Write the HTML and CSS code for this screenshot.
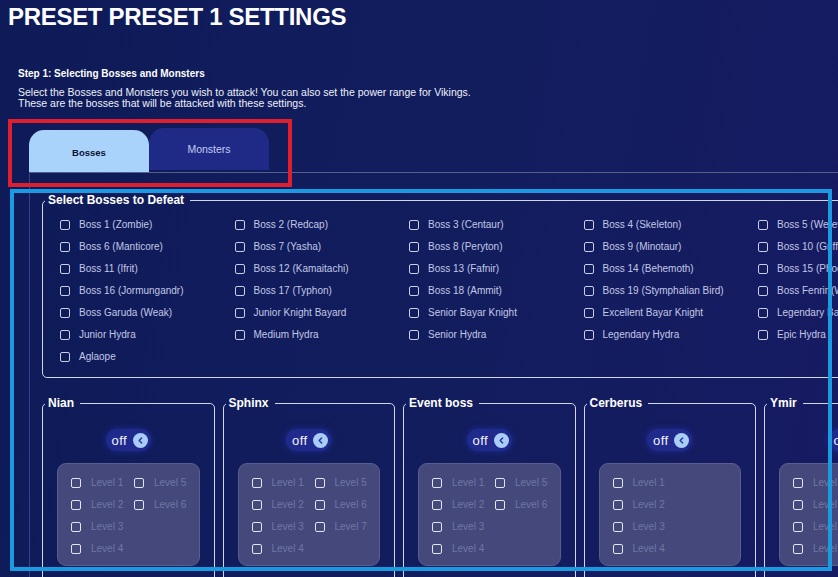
FILE: index.html
```html
<!DOCTYPE html>
<html lang="en">
<head>
  <meta charset="UTF-8">
  <meta name="viewport" content="width=device-width, initial-scale=1.0">
  <title>Preset 1 Settings</title>
  <link rel="stylesheet" href="styles.css">
</head>
<body>

<div class="page">
  <h1 class="title">PRESET PRESET 1 SETTINGS</h1>

  <section class="step">
    <h2 class="step-title">Step 1: Selecting Bosses and Monsters</h2>
    <p class="step-text">Select the Bosses and Monsters you wish to attack! You can also set the power range for Vikings.<br>These are the bosses that will be attacked with these settings.</p>
  </section>

  <div class="tabs">
    <button class="tab active" type="button">Bosses</button>
    <button class="tab" type="button">Monsters</button>
  </div>

  <div class="tab-panel">
    <!-- Lista de jefes -->
    <fieldset class="group bosses">
      <legend>Select Bosses to Defeat</legend>
      <div class="boss-grid">
        <label class="check"><input type="checkbox">Boss 1 (Zombie)</label>
        <label class="check"><input type="checkbox">Boss 2 (Redcap)</label>
        <label class="check"><input type="checkbox">Boss 3 (Centaur)</label>
        <label class="check"><input type="checkbox">Boss 4 (Skeleton)</label>
        <label class="check"><input type="checkbox">Boss 5 (Werewolf)</label>
        <label class="check"><input type="checkbox">Boss 6 (Manticore)</label>
        <label class="check"><input type="checkbox">Boss 7 (Yasha)</label>
        <label class="check"><input type="checkbox">Boss 8 (Peryton)</label>
        <label class="check"><input type="checkbox">Boss 9 (Minotaur)</label>
        <label class="check"><input type="checkbox">Boss 10 (Griffin)</label>
        <label class="check"><input type="checkbox">Boss 11 (Ifrit)</label>
        <label class="check"><input type="checkbox">Boss 12 (Kamaitachi)</label>
        <label class="check"><input type="checkbox">Boss 13 (Fafnir)</label>
        <label class="check"><input type="checkbox">Boss 14 (Behemoth)</label>
        <label class="check"><input type="checkbox">Boss 15 (Phoenix)</label>
        <label class="check"><input type="checkbox">Boss 16 (Jormungandr)</label>
        <label class="check"><input type="checkbox">Boss 17 (Typhon)</label>
        <label class="check"><input type="checkbox">Boss 18 (Ammit)</label>
        <label class="check"><input type="checkbox">Boss 19 (Stymphalian Bird)</label>
        <label class="check"><input type="checkbox">Boss Fenrir (Weak)</label>
        <label class="check"><input type="checkbox">Boss Garuda (Weak)</label>
        <label class="check"><input type="checkbox">Junior Knight Bayard</label>
        <label class="check"><input type="checkbox">Senior Bayar Knight</label>
        <label class="check"><input type="checkbox">Excellent Bayar Knight</label>
        <label class="check"><input type="checkbox">Legendary Bayar Knight</label>
        <label class="check"><input type="checkbox">Junior Hydra</label>
        <label class="check"><input type="checkbox">Medium Hydra</label>
        <label class="check"><input type="checkbox">Senior Hydra</label>
        <label class="check"><input type="checkbox">Legendary Hydra</label>
        <label class="check"><input type="checkbox">Epic Hydra</label>
        <label class="check"><input type="checkbox">Aglaope</label>
      </div>
    </fieldset>

    <!-- Jefes de evento con niveles -->
    <div class="event-grid">
      <fieldset class="group event">
        <legend>Nian</legend>
        <div class="toggle"><span>off</span><span class="knob"><svg viewBox="0 0 16 16" width="15" height="15"><path d="M9.2 5.3 6.6 8l2.6 2.7" fill="none" stroke="#2a3a9c" stroke-width="1.6" stroke-linecap="round" stroke-linejoin="round"/></svg></span></div>
        <div class="levels">
          <label class="check level"><input type="checkbox" disabled>Level 1</label>
          <label class="check level"><input type="checkbox" disabled>Level 2</label>
          <label class="check level"><input type="checkbox" disabled>Level 3</label>
          <label class="check level"><input type="checkbox" disabled>Level 4</label>
          <label class="check level"><input type="checkbox" disabled>Level 5</label>
          <label class="check level"><input type="checkbox" disabled>Level 6</label>
        </div>
      </fieldset>

      <fieldset class="group event">
        <legend>Sphinx</legend>
        <div class="toggle"><span>off</span><span class="knob"><svg viewBox="0 0 16 16" width="15" height="15"><path d="M9.2 5.3 6.6 8l2.6 2.7" fill="none" stroke="#2a3a9c" stroke-width="1.6" stroke-linecap="round" stroke-linejoin="round"/></svg></span></div>
        <div class="levels">
          <label class="check level"><input type="checkbox" disabled>Level 1</label>
          <label class="check level"><input type="checkbox" disabled>Level 2</label>
          <label class="check level"><input type="checkbox" disabled>Level 3</label>
          <label class="check level"><input type="checkbox" disabled>Level 4</label>
          <label class="check level"><input type="checkbox" disabled>Level 5</label>
          <label class="check level"><input type="checkbox" disabled>Level 6</label>
          <label class="check level"><input type="checkbox" disabled>Level 7</label>
        </div>
      </fieldset>

      <fieldset class="group event">
        <legend>Event boss</legend>
        <div class="toggle"><span>off</span><span class="knob"><svg viewBox="0 0 16 16" width="15" height="15"><path d="M9.2 5.3 6.6 8l2.6 2.7" fill="none" stroke="#2a3a9c" stroke-width="1.6" stroke-linecap="round" stroke-linejoin="round"/></svg></span></div>
        <div class="levels">
          <label class="check level"><input type="checkbox" disabled>Level 1</label>
          <label class="check level"><input type="checkbox" disabled>Level 2</label>
          <label class="check level"><input type="checkbox" disabled>Level 3</label>
          <label class="check level"><input type="checkbox" disabled>Level 4</label>
          <label class="check level"><input type="checkbox" disabled>Level 5</label>
          <label class="check level"><input type="checkbox" disabled>Level 6</label>
        </div>
      </fieldset>

      <fieldset class="group event">
        <legend>Cerberus</legend>
        <div class="toggle"><span>off</span><span class="knob"><svg viewBox="0 0 16 16" width="15" height="15"><path d="M9.2 5.3 6.6 8l2.6 2.7" fill="none" stroke="#2a3a9c" stroke-width="1.6" stroke-linecap="round" stroke-linejoin="round"/></svg></span></div>
        <div class="levels">
          <label class="check level"><input type="checkbox" disabled>Level 1</label>
          <label class="check level"><input type="checkbox" disabled>Level 2</label>
          <label class="check level"><input type="checkbox" disabled>Level 3</label>
          <label class="check level"><input type="checkbox" disabled>Level 4</label>
        </div>
      </fieldset>

      <fieldset class="group event">
        <legend>Ymir</legend>
        <div class="toggle"><span>off</span><span class="knob"><svg viewBox="0 0 16 16" width="15" height="15"><path d="M9.2 5.3 6.6 8l2.6 2.7" fill="none" stroke="#2a3a9c" stroke-width="1.6" stroke-linecap="round" stroke-linejoin="round"/></svg></span></div>
        <div class="levels">
          <label class="check level"><input type="checkbox" disabled>Level 1</label>
          <label class="check level"><input type="checkbox" disabled>Level 2</label>
          <label class="check level"><input type="checkbox" disabled>Level 3</label>
          <label class="check level"><input type="checkbox" disabled>Level 4</label>
        </div>
      </fieldset>
    </div>
  </div>
</div>

<!-- Marcos de resaltado -->
<div class="highlight highlight-tabs"></div>
<div class="highlight highlight-content"></div>

</body>
</html>
```

FILE: styles.css
```css
html,
body {
  overflow: hidden;
}
body {
  font-family: "Liberation Sans", Arial, sans-serif;
  background: linear-gradient(100deg, #0e1b58 0%, #121d5e 55%, #171b62 100%);
  color: #fff;
  margin: 0;
  min-height: 577px;
  position: relative;
}
.page {
  width: 1000px;
}
.title {
  margin: 3px 0 0 8px;
  font-size: 24px;
  line-height: 28px;
  font-weight: bold;
  letter-spacing: -0.3px;
}
.step {
  margin-left: 18px;
}
.step-title {
  margin: 37px 0 0;
  font-size: 10px;
  line-height: 12px;
  font-weight: bold;
}
.step-text {
  margin: 7px 0 0;
  font-size: 10.5px;
  line-height: 11px;
  color: #eef0fa;
}
/* Pestañas */
.tabs {
  display: flex;
  align-items: flex-end;
  margin: 19px 0 0 29px;
}
.tab {
  width: 120px;
  height: 42px;
  border: none;
  border-radius: 15px 15px 0 0;
  font-family: inherit;
  padding: 0;
  cursor: pointer;
}
.tab.active {
  background-color: #a9d3fb;
  color: #0a1236;
  font-weight: bold;
  font-size: 9.5px;
  padding-top: 2px;
}
.tab:not(.active) {
  background-color: #1f2a86;
  color: #c3cbf2;
  font-size: 10.5px;
  margin-bottom: 2px;
}
.tab-panel {
  margin-left: 29px;
  border-top: 1px solid #55608f;
  border-left: 1px solid #35418a;
  padding-bottom: 40px;
}
/* Grupos con leyenda */
.group {
  margin: 0;
  border: 1px solid #d3d7ee;
  border-radius: 5px;
  min-inline-size: 0;
}
.group legend {
  font-size: 12px;
  line-height: 14px;
  font-weight: bold;
  padding: 0 6px 0 3px;
  color: #fff;
}
.bosses {
  width: 900px;
  margin: 20px 0 0 12px;
  padding: 7px 0 9px 2px;
}
.boss-grid {
  display: grid;
  grid-template-columns: repeat(5, 174.5px);
  grid-auto-rows: 22px;
  margin-left: 15px;
}
.check {
  display: flex;
  align-items: center;
  gap: 9px;
  font-size: 10px;
  line-height: 12px;
  color: #c3c8e6;
  white-space: nowrap;
}
.check input[type="checkbox"] {
  appearance: none;
  margin: 0;
  width: 10px;
  height: 10px;
  flex: none;
  border: 1px solid #c9cee9;
  border-radius: 2px;
  background: transparent;
}
.event-grid {
  display: grid;
  grid-template-columns: repeat(5, 172.5px);
  column-gap: 8px;
  margin: 18px 0 0 12px;
}
.event {
  padding: 19px 14px 24px 2px;
}
/* Interruptor on/off */
.toggle {
  display: flex;
  align-items: center;
  gap: 6px;
  width: max-content;
  height: 22px;
  margin: 0 auto;
  padding: 0 3px 0 6px;
  border-radius: 11px;
  background-color: #1f2a8c;
  box-shadow: 0 0 6px rgba(40, 60, 190, 0.55);
  font-size: 13px;
  letter-spacing: 0.4px;
  color: #f4f5fc;
  position: relative;
  left: 6px;
}
.knob {
  display: flex;
  width: 15px;
  height: 15px;
  border-radius: 50%;
  background-color: #a9cdf6;
}
.levels {
  display: grid;
  grid-template-columns: 63px auto;
  grid-template-rows: repeat(4, 22px);
  grid-auto-flow: column;
  margin: 12px 0 0 12px;
  padding: 8px 0 5px 13px;
  background-color: #44487a;
  border: 1px solid #5a5e8e;
  border-radius: 9px;
}
.check.level {
  gap: 10px;
  color: #7077a5;
}
.check.level input[type="checkbox"] {
  border-color: #e2e5f5;
}
/* Marcos de resaltado */
.highlight {
  position: absolute;
  box-sizing: border-box;
  border: 4px solid;
  pointer-events: none;
}
.highlight-tabs {
  left: 8px;
  top: 119px;
  width: 284px;
  height: 68px;
  border-color: #e01f2e;
}
.highlight-content {
  left: 10px;
  top: 189px;
  width: 822px;
  height: 382px;
  border-color: #1a9ae1;
}
```
